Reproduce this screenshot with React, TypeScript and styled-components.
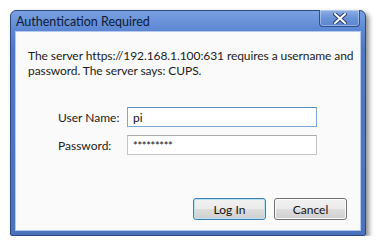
import React from "react";
import styled, { createGlobalStyle } from "styled-components";

const Global = createGlobalStyle`
  html, body { margin: 0; padding: 0; background: #ffffff; }
  body { font-family: "Lato", "Open Sans", sans-serif; }
`;

const Page = styled.div`
  padding: 10px 0 0 10px;
`;

const Window = styled.div`
  width: 356px;
  height: 226px;
  box-sizing: border-box;
  border: 1px solid #2b4a82;
  border-radius: 6px 6px 2px 2px;
  background: linear-gradient(180deg, #7aa0e2 0px, #5b86d2 20px, #4f78c4 40px, #4a72bd 100%);
  padding: 0 4px 4px;
  display: flex;
  flex-direction: column;
  box-shadow: 3px 3px 5px rgba(0, 0, 0, 0.45);
`;

const TitleBar = styled.div`
  height: 20px;
  display: flex;
  align-items: center;
  justify-content: space-between;
  position: relative;
`;

const Title = styled.div`
  font-size: 12.5px;
  color: #0d1a33;
  padding-left: 1px;
  padding-top: 1px;
`;

const CloseButton = styled.div`
  position: absolute;
  right: 1px;
  top: -1px;
  width: 41px;
  height: 17px;
  box-sizing: border-box;
  border: 1px solid #2f4f8a;
  border-top: none;
  border-radius: 0 0 4px 4px;
  background: linear-gradient(180deg, #8fb0e6 0%, #6b93d8 50%, #5a84cf 100%);
  box-shadow: inset 0 0 0 1px rgba(255, 255, 255, 0.35);
  display: flex;
  align-items: center;
  justify-content: center;
`;

const Body = styled.div`
  flex: 1;
  border: 1px solid #b4c9ec;
  background: #fafafa;
  display: flex;
  flex-direction: column;
  padding: 16px 13px 10px 12px;
  font-size: 12px;
  color: #1a1a1a;
`;

const Message = styled.p`
  margin: 0;
  line-height: 15px;
  white-space: nowrap;
  letter-spacing: -0.08px;
`;

const Form = styled.div`
  display: grid;
  grid-template-columns: 69px 190px;
  row-gap: 8px;
  margin: 29px 0 0 30px;
  align-items: center;
`;

const Label = styled.label`
  font-size: 12px;
  color: #1a1a1a;
`;

const Field = styled.div<{ $focused?: boolean }>`
  height: 20px;
  box-sizing: border-box;
  border: 1px solid ${(p) => (p.$focused ? "#7ea6d2" : "#c4c4c4")};
  border-top-color: ${(p) => (p.$focused ? "#5d8cc0" : "#acacac")};
  background: #ffffff;
  padding: 0 5px;
  display: flex;
  align-items: center;
  font-size: 12px;
  color: #111;
`;

const Secret = styled.span`
  font-size: 11px;
  letter-spacing: -0.3px;
  padding-top: 1px;
`;

const Buttons = styled.div`
  margin-top: auto;
  display: flex;
  justify-content: flex-end;
  gap: 8px;
`;

const Button = styled.div<{ $default?: boolean }>`
  width: 73px;
  height: 22px;
  box-sizing: border-box;
  border: 1px solid ${(p) => (p.$default ? "#3c7fb1" : "#707070")};
  border-radius: 3px;
  background: linear-gradient(180deg, #f2f2f2 0%, #ebebeb 50%, #dddddd 51%, #cfcfcf 100%);
  box-shadow: inset 0 0 0 1px ${(p) => (p.$default ? "#b9e2f7" : "#fcfcfc")};
  display: flex;
  align-items: center;
  justify-content: center;
  font-size: 12px;
  color: #111;
`;

export default function App() {
  return (
    <>
      <Global />
      <Page>
        <Window>
          <TitleBar>
            <Title>Authentication Required</Title>
            <CloseButton>
              <svg width="14" height="11" viewBox="0 0 14 11">
                <path d="M2 1 L12 10 M12 1 L2 10" stroke="#2b3f6b" strokeWidth="4" strokeLinecap="square" />
                <path d="M2 1 L12 10 M12 1 L2 10" stroke="#ffffff" strokeWidth="2" strokeLinecap="square" />
              </svg>
            </CloseButton>
          </TitleBar>
          <Body>
            <Message>
              The server https://192.168.1.100:631 requires a username and
              <br />
              password. The server says: CUPS.
            </Message>
            <Form>
              <Label>User Name:</Label>
              <Field $focused>pi</Field>
              <Label>Password:</Label>
              <Field>
                <Secret>*********</Secret>
              </Field>
            </Form>
            <Buttons>
              <Button $default>Log In</Button>
              <Button>Cancel</Button>
            </Buttons>
          </Body>
        </Window>
      </Page>
    </>
  );
}
